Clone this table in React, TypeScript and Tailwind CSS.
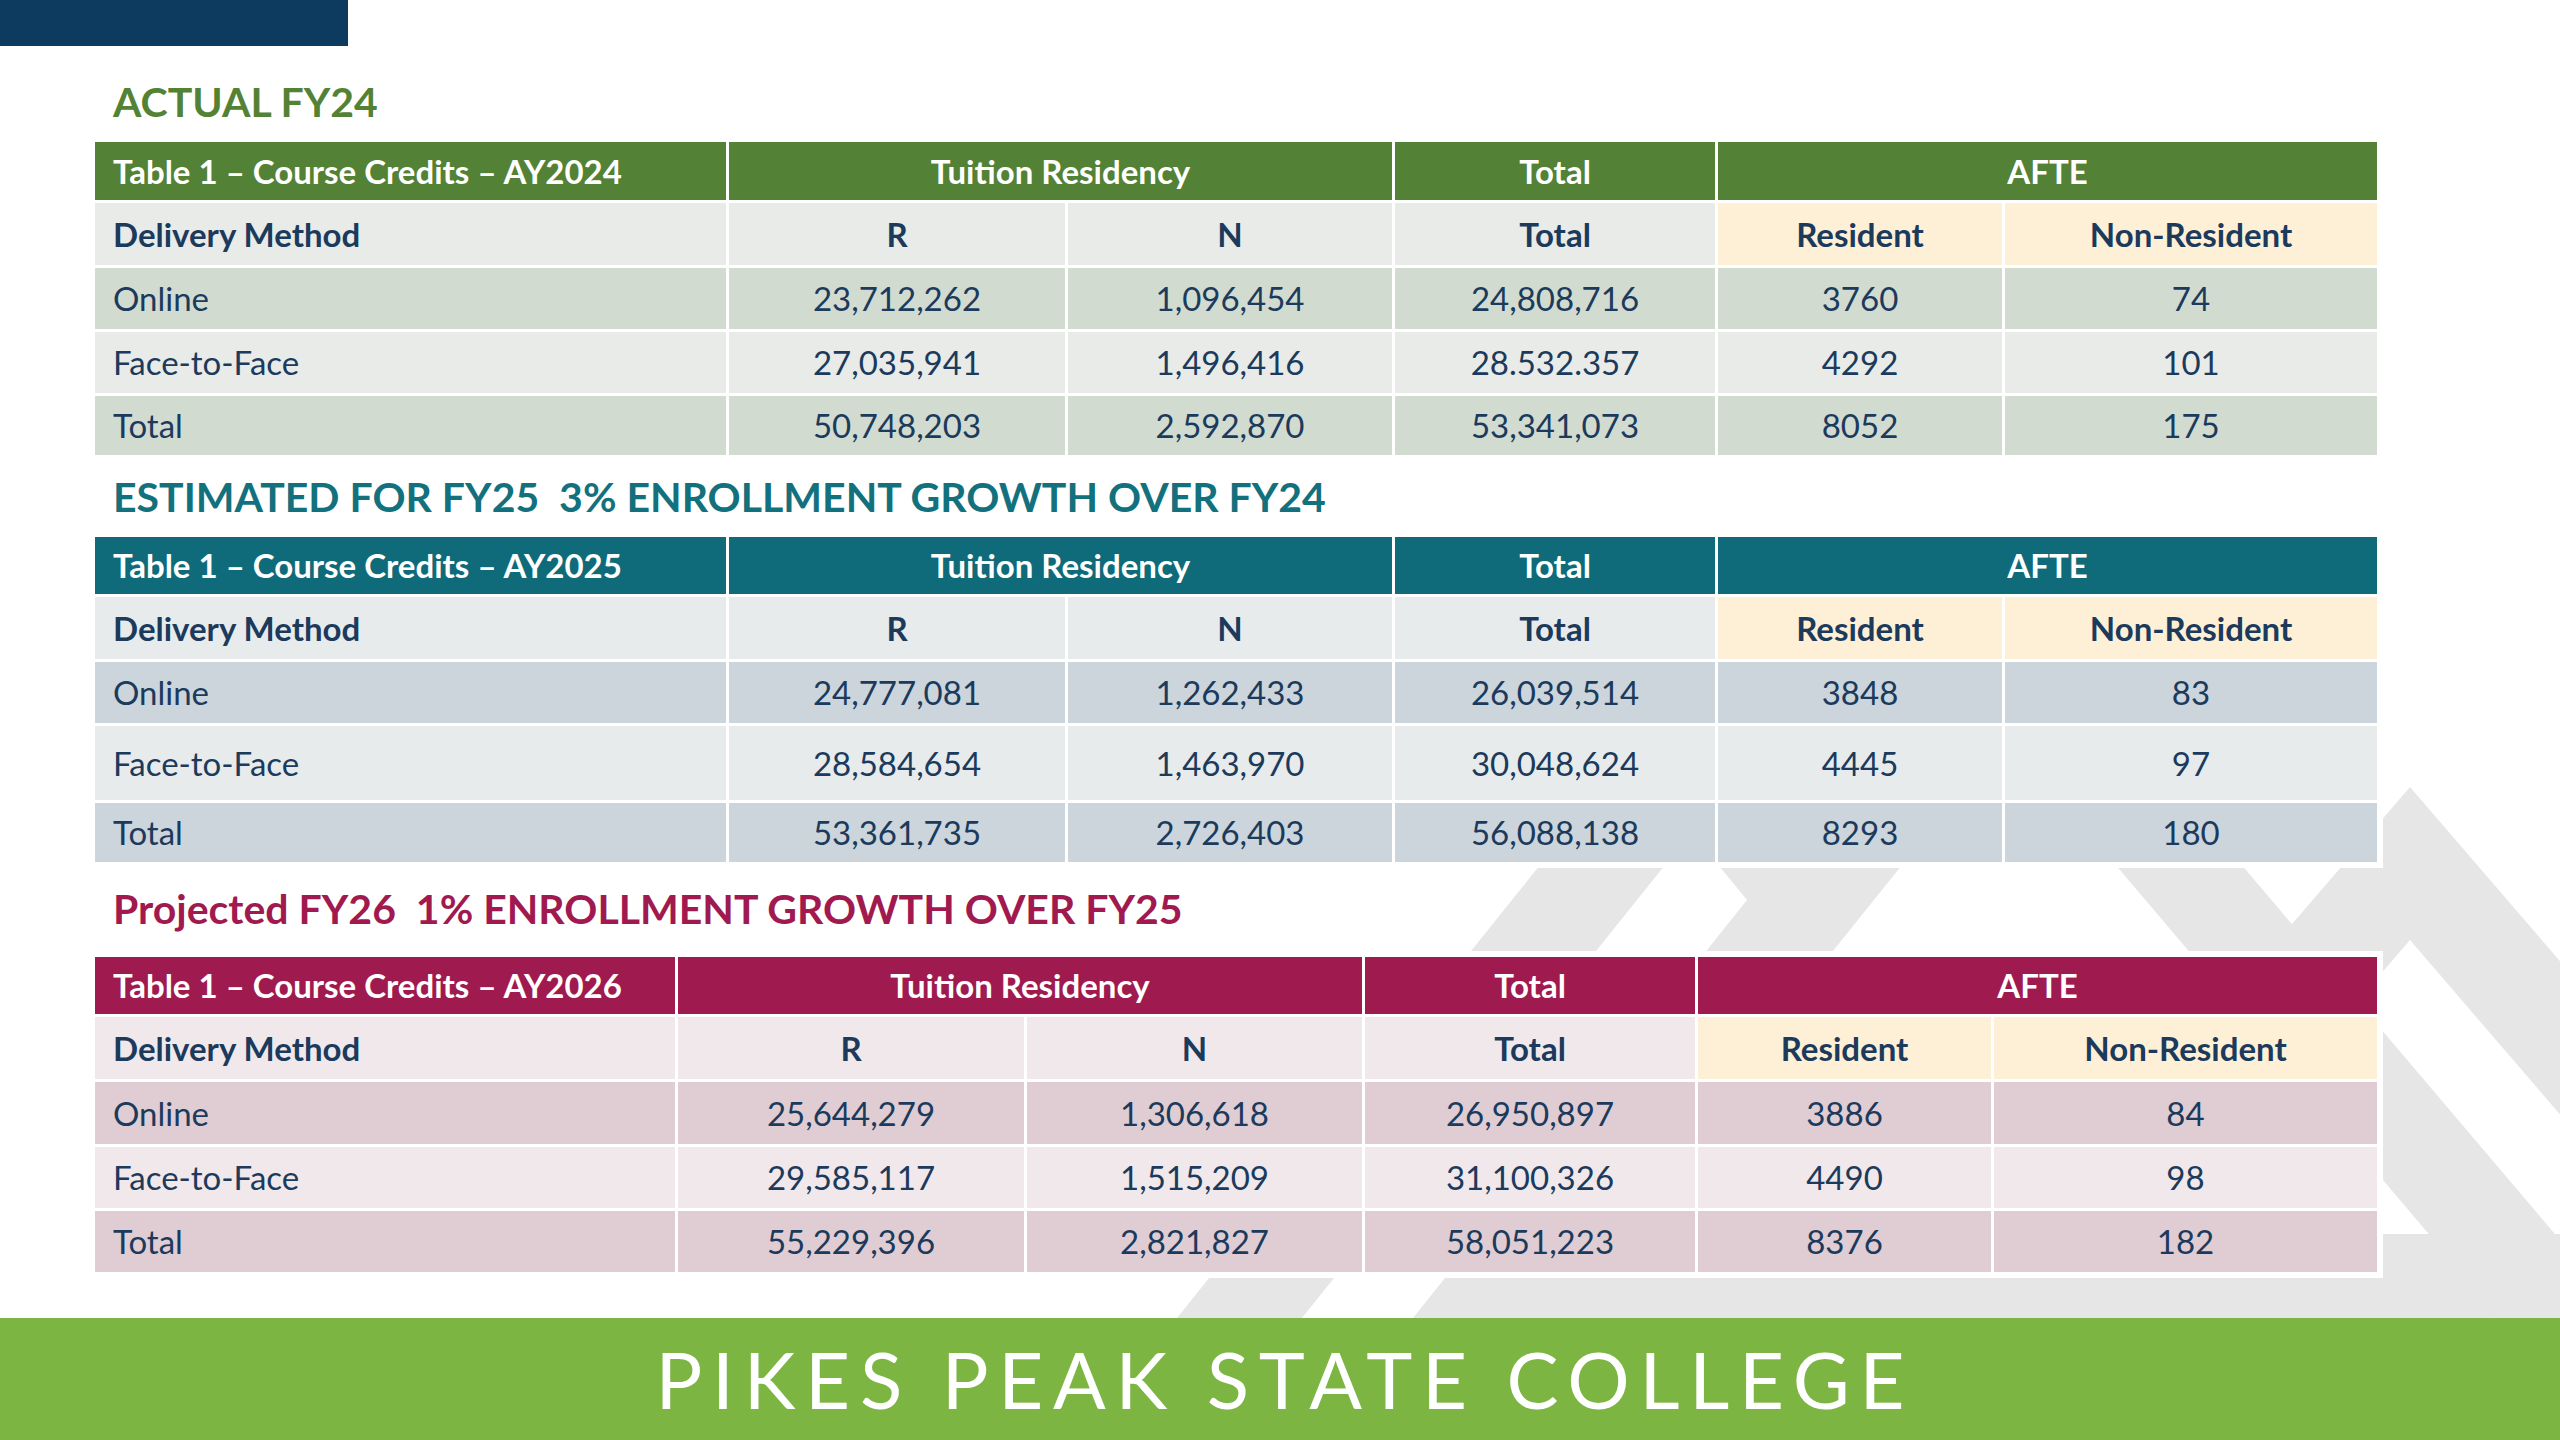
import React from "react";

type TableDef = {
  title: string;
  titleColor: string;
  headBg: string;
  light: string;
  dark: string;
  cols: string;
  rowsCls: string;
  head: string;
  rows: string[][];
};

const tables: TableDef[] = [
  {
    title: "ACTUAL FY24",
    titleColor: "text-[#548235]",
    headBg: "bg-[#538135]",
    light: "bg-[#e8ebe8]",
    dark: "bg-[#d2dbd0]",
    cols: "grid-cols-[631px_336px_324px_320px_284px_372px]",
    rowsCls: "grid-rows-[58px_62px_61px_61px_59px]",
    head: "Table 1 – Course Credits – AY2024",
    rows: [
      ["Online", "23,712,262", "1,096,454", "24,808,716", "3760", "74"],
      ["Face-to-Face", "27,035,941", "1,496,416", "28.532.357", "4292", "101"],
      ["Total", "50,748,203", "2,592,870", "53,341,073", "8052", "175"],
    ],
  },
  {
    title: "ESTIMATED FOR FY25  3% ENROLLMENT GROWTH OVER FY24",
    titleColor: "text-[#13717e]",
    headBg: "bg-[#0f6b79]",
    light: "bg-[#e7ebec]",
    dark: "bg-[#cbd5db]",
    cols: "grid-cols-[631px_336px_324px_320px_284px_372px]",
    rowsCls: "grid-rows-[57px_62px_61px_74px_59px]",
    head: "Table 1 – Course Credits – AY2025",
    rows: [
      ["Online", "24,777,081", "1,262,433", "26,039,514", "3848", "83"],
      ["Face-to-Face", "28,584,654", "1,463,970", "30,048,624", "4445", "97"],
      ["Total", "53,361,735", "2,726,403", "56,088,138", "8293", "180"],
    ],
  },
  {
    title: "Projected FY26  1% ENROLLMENT GROWTH OVER FY25",
    titleColor: "text-[#a01a50]",
    headBg: "bg-[#9f1a4e]",
    light: "bg-[#f0e8eb]",
    dark: "bg-[#e0cdd3]",
    cols: "grid-cols-[580px_346px_335px_330px_293px_383px]",
    rowsCls: "grid-rows-[57px_62px_62px_61px_61px]",
    head: "Table 1 – Course Credits – AY2026",
    rows: [
      ["Online", "25,644,279", "1,306,618", "26,950,897", "3886", "84"],
      ["Face-to-Face", "29,585,117", "1,515,209", "31,100,326", "4490", "98"],
      ["Total", "55,229,396", "2,821,827", "58,051,223", "8376", "182"],
    ],
  },
];

function DataTable({ t }: { t: TableDef }) {
  const head = `${t.headBg} flex items-center justify-center text-white font-bold`;
  const sub = "flex items-center justify-center font-bold text-[#1b3a5c]";
  const cream = "bg-[#fdf0d7]";
  return (
    <div
      className={`grid ${t.cols} ${t.rowsCls} gap-[3px] bg-white ring-[6px] ring-white w-[2282px] text-[33px] leading-none`}
    >
      <div className={`${t.headBg} flex items-center pl-[18px] text-white font-bold`}>{t.head}</div>
      <div className={`${head} col-span-2`}>Tuition Residency</div>
      <div className={head}>Total</div>
      <div className={`${head} col-span-2`}>AFTE</div>

      <div className={`${t.light} flex items-center pl-[18px] font-bold text-[#1b3a5c]`}>Delivery Method</div>
      <div className={`${t.light} ${sub}`}>R</div>
      <div className={`${t.light} ${sub}`}>N</div>
      <div className={`${t.light} ${sub}`}>Total</div>
      <div className={`${cream} ${sub}`}>Resident</div>
      <div className={`${cream} ${sub}`}>Non-Resident</div>

      {t.rows.map((r, i) => {
        const bg = i === 1 ? t.light : t.dark;
        return (
          <React.Fragment key={i}>
            {r.map((c, j) => (
              <div
                key={j}
                className={`${bg} flex items-center text-[#1b3a5c] ${j === 0 ? "pl-[18px]" : "justify-center"}`}
              >
                {c}
              </div>
            ))}
          </React.Fragment>
        );
      })}
    </div>
  );
}

function Title({ t, cls }: { t: TableDef; cls: string }) {
  return (
    <div className={`flex items-center pl-[18px] ${cls}`}>
      <span className={`${t.titleColor} font-bold text-[41px] leading-none whitespace-pre`}>{t.title}</span>
    </div>
  );
}

export default function App() {
  return (
    <div
      className="relative w-[2560px] h-[1440px] overflow-hidden bg-white"
      style={{ fontFamily: "Lato, 'Noto Sans', sans-serif" }}
    >
      <svg className="absolute left-0 top-0" width="2560" height="1440" viewBox="0 0 2560 1440">
        <g fill="#e6e6e6">
          <polygon points="1552,850 1677,850 1302,1318 1177,1318" />
          <polygon points="1706,850 1914,850 1606,1234 2560,1234 2560,1318 1413,1318 1747,900" />
          <polygon points="2103,850 2229,850 2560,1240 2560,1318 2500,1318" />
          <path
            fillRule="evenodd"
            d="M2410 787 L2867 1318 L1953 1318 Z M2410 940 L2735 1318 L2085 1318 Z"
          />
        </g>
      </svg>

      <div className="relative flex flex-col h-full">
        <div className="h-[46px] w-[348px] bg-[#0d3a5f]" />
        <div className="flex flex-col pl-[95px]">
          <Title t={tables[0]} cls="h-[96px] pt-[14px]" />
          <DataTable t={tables[0]} />
          <Title t={tables[1]} cls="h-[82px]" />
          <DataTable t={tables[1]} />
          <Title t={tables[2]} cls="h-[95px] pb-[3px]" />
          <DataTable t={tables[2]} />
        </div>
        <div className="flex-1" />
        <div className="h-[122px] bg-[#7cb542] flex items-center justify-center">
          <span className="text-white text-[78px] leading-none tracking-[0.125em] pl-[0.125em] font-normal">
            PIKES PEAK STATE COLLEGE
          </span>
        </div>
      </div>
    </div>
  );
}
